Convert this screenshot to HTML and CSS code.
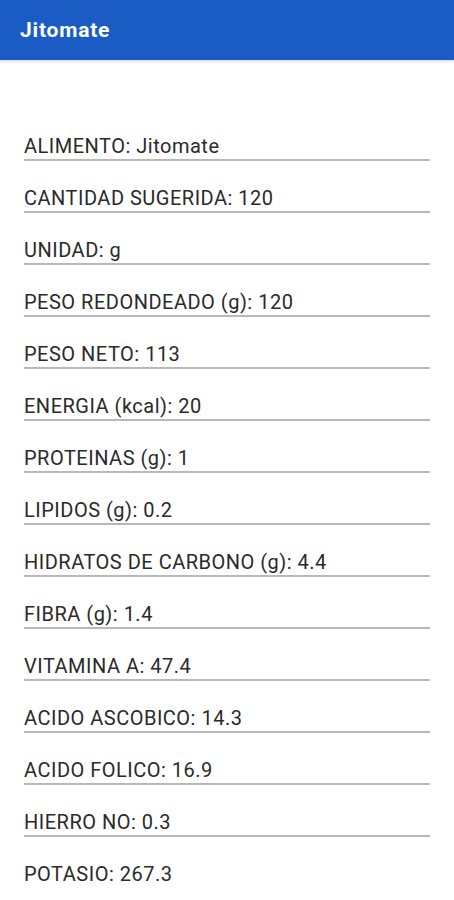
FILE: index.html
```html
<!DOCTYPE html>
<html lang="es">
<head>
    <meta charset="UTF-8">
    <meta name="viewport" content="width=device-width, initial-scale=1.0">
    <title>Jitomate</title>
    <link rel="stylesheet" href="styles.css">
</head>
<body>
    <header class="toolbar">
        <span class="toolbar-title">Jitomate</span>
    </header>

    <div class="fields">
        <div class="field">ALIMENTO: Jitomate</div>
        <div class="field">CANTIDAD SUGERIDA: 120</div>
        <div class="field">UNIDAD: g</div>
        <div class="field">PESO REDONDEADO (g): 120</div>
        <div class="field">PESO NETO: 113</div>
        <div class="field">ENERGIA (kcal): 20</div>
        <div class="field">PROTEINAS (g): 1</div>
        <div class="field">LIPIDOS (g): 0.2</div>
        <div class="field">HIDRATOS DE CARBONO (g): 4.4</div>
        <div class="field">FIBRA (g): 1.4</div>
        <div class="field">VITAMINA A: 47.4</div>
        <div class="field">ACIDO ASCOBICO: 14.3</div>
        <div class="field">ACIDO FOLICO: 16.9</div>
        <div class="field">HIERRO NO: 0.3</div>
        <div class="field">POTASIO: 267.3</div>
    </div>
</body>
</html>
```

FILE: styles.css
```css
body {
    margin: 0;
    padding: 0;
    height: 100%;
    font-family: Roboto, 'Noto Sans', sans-serif;
    background-color: #fff;
    overflow: hidden;
}

.toolbar {
    height: 60px;
    background-color: #1a5cc4;
    color: white;
    display: flex;
    align-items: center;
    padding-left: 20px;
    box-shadow: 0 1px 3px rgba(0, 0, 0, 0.2);
}

.toolbar-title {
    font-size: 21px;
    font-weight: bold;
    letter-spacing: 0.8px;
    margin-top: -1px;
}

.fields {
    padding: 49px 24px 0;
}

.field {
    padding: 25px 0 1px;
    line-height: 24px;
    font-size: 20px;
    letter-spacing: 0.5px;
    color: #2a2a2a;
    border-bottom: 2px solid #b8b8b8;
}

.field:last-child {
    border-bottom: none;
}
```
